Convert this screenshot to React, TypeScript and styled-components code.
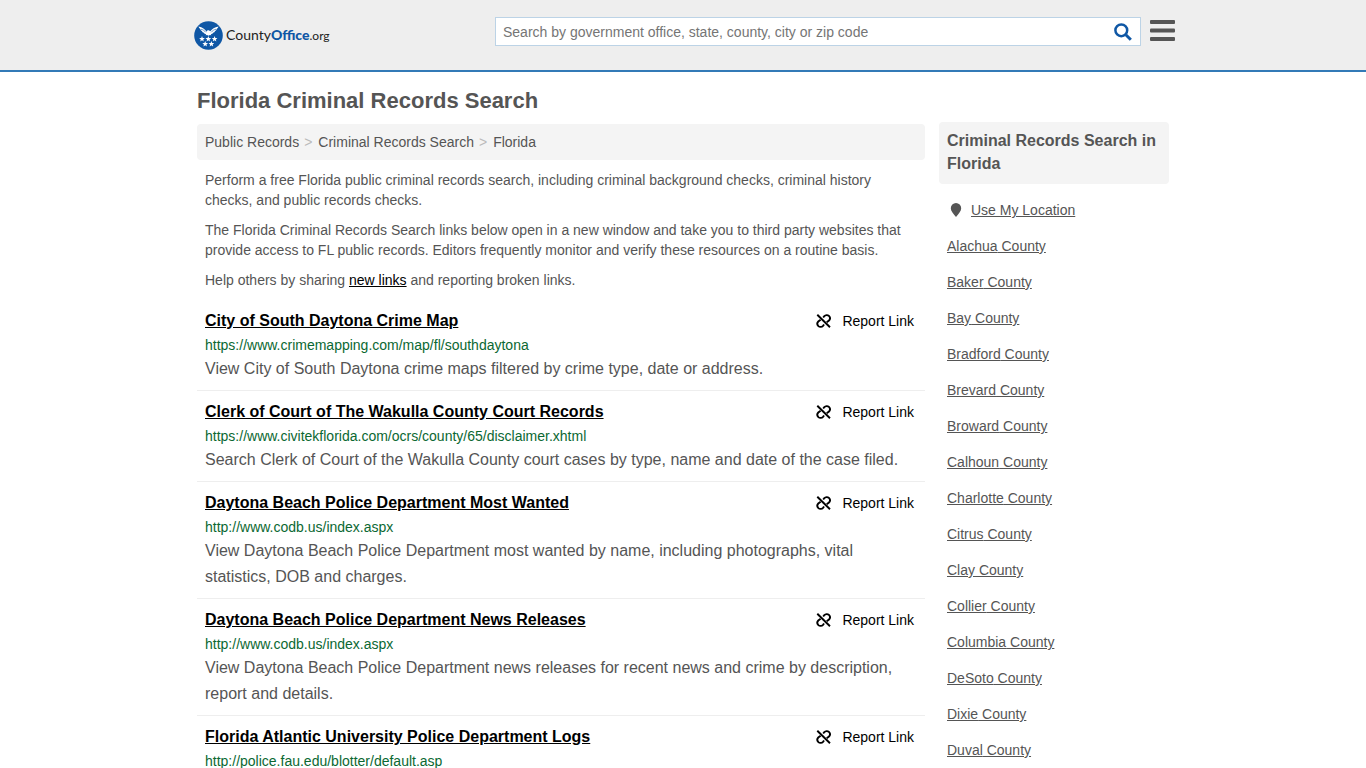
import React from "react";
import styled, { createGlobalStyle } from "styled-components";

const GlobalStyle = createGlobalStyle`
  *, *::before, *::after { box-sizing: border-box; }
  body {
    margin: 0;
    background: #fff;
    color: #555;
    font: 14px/20px "Liberation Sans", Arial, Helvetica, sans-serif;
  }
  h1, h2, h3, p, ul, ol { margin: 0; padding: 0; }
  ul, ol { list-style: none; }
  a { color: inherit; }
  html { overflow-x: hidden; scrollbar-width: none; }
`;

const Header = styled.header`
  background: #eee;
  border-bottom: 2px solid #337ab7;
`;

const HeaderInner = styled.div`
  display: flex;
  align-items: center;
  max-width: 988px;
  height: 70px;
  margin: 0 auto;
  padding: 0 2px 8px 5px;
`;

const Logo = styled.a`
  display: flex;
  align-items: center;
  gap: 3px;
  margin-top: 8px;
  color: #222;
  font: 14px/20px Lato, sans-serif;
  text-decoration: none;

  b { color: #0f57a5; font-weight: 900; }
  small { font-size: 12px; }
`;

const SearchForm = styled.form`
  display: flex;
  flex: 0 1 646px;
  height: 29px;
  margin-left: auto;
  background: #fff;
  border: 1px solid #bcd3e6;
`;

const SearchInput = styled.input`
  flex: 1;
  min-width: 0;
  padding: 2px 7px 0;
  border: 0;
  background: none;
  color: #555;
  font: inherit;
  outline: none;

  &::placeholder { color: #757575; opacity: 1; }
`;

const IconButton = styled.button`
  display: flex;
  align-items: center;
  justify-content: center;
  flex: none;
  width: 34px;
  padding: 2px 0 0;
  border: 0;
  background: none;
  cursor: pointer;
`;

const MenuButton = styled(IconButton)`
  width: 26px;
  margin-left: 8px;
  padding: 0;
`;

const Page = styled.main`
  max-width: 988px;
  margin: 0 auto;
  padding: 16px 8px;
`;

const Title = styled.h1`
  margin-bottom: 8px;
  font-size: 22px;
  line-height: 26px;
`;

const Columns = styled.div`
  display: flex;
  align-items: flex-start;
  gap: 14px;
`;

const MainColumn = styled.div`
  flex: 1;
  min-width: 0;
  padding-top: 2px;
`;

const Crumbs = styled.ol`
  display: flex;
  padding: 8px;
  border-radius: 4px;
  background: #f4f4f4;

  a { text-decoration: none; }
  li + li::before { content: ">"; padding: 0 6px 0 5px; color: #bbb; }
`;

const Intro = styled.div`
  display: grid;
  gap: 10px;
  padding: 10px 8px;

  a { color: #000; }
`;

const Resource = styled.li`
  padding: 8px 11px 8px 8px;
  border-bottom: 1px solid #eee;
`;

const ResourceTop = styled.div`
  display: flex;
  justify-content: space-between;
  line-height: 26px;
`;

const ResourceTitle = styled.h2`
  color: #000;
  font-size: 16px;
`;

const ResourceUrl = styled.p`
  color: #0b6832;
  line-height: 22px;
`;

const ResourceText = styled.p`
  max-width: 700px;
  font-size: 16px;
  line-height: 26px;
`;

const ReportLink = styled.a`
  display: flex;
  align-items: center;
  gap: 11px;
  color: #000;
  text-decoration: none;
`;

const Sidebar = styled.aside`
  flex: 0 0 230px;
`;

const SidebarTitle = styled.h3`
  padding: 7px 8px 9px;
  border-radius: 4px;
  background: #f4f4f4;
  font-size: 16px;
  line-height: 23px;
`;

const CountyList = styled.ul`
  padding: 8px;
  line-height: 36px;
`;

const LocationItem = styled.li`
  display: flex;
  align-items: center;
  gap: 9px;
  padding-left: 3px;
`;

const resources = [
  ["City of South Daytona Crime Map", "https://www.crimemapping.com/map/fl/southdaytona", "View City of South Daytona crime maps filtered by crime type, date or address."],
  ["Clerk of Court of The Wakulla County Court Records", "https://www.civitekflorida.com/ocrs/county/65/disclaimer.xhtml", "Search Clerk of Court of the Wakulla County court cases by type, name and date of the case filed."],
  ["Daytona Beach Police Department Most Wanted", "http://www.codb.us/index.aspx", "View Daytona Beach Police Department most wanted by name, including photographs, vital statistics, DOB and charges."],
  ["Daytona Beach Police Department News Releases", "http://www.codb.us/index.aspx", "View Daytona Beach Police Department news releases for recent news and crime by description, report and details."],
  ["Florida Atlantic University Police Department Logs", "http://police.fau.edu/blotter/default.asp", ""],
];

const counties = ["Alachua", "Baker", "Bay", "Bradford", "Brevard", "Broward", "Calhoun", "Charlotte", "Citrus", "Clay", "Collier", "Columbia", "DeSoto", "Dixie", "Duval"];

function starPoints(cx: number, cy: number) {
  return Array.from({ length: 10 }, (_, i) => {
    const radius = i % 2 ? 1.3 : 3;
    const angle = (i * Math.PI) / 5 - Math.PI / 2;
    return `${cx + radius * Math.cos(angle)},${cy + radius * Math.sin(angle)}`;
  }).join(" ");
}

const stars = [[8, 18], [14.3, 18], [20.6, 18], [11.2, 23], [17.4, 23]];

function Emblem() {
  return (
    <svg width="29" height="29" viewBox="0 0 29 29" aria-hidden="true">
      <circle cx="14.5" cy="14.5" r="14.3" fill="#0f57a5" />
      <g fill="#fff">
        <path d="M4.500 5.500C8.500 6.200 11 8.500 12.600 10.700c.5-1.200 1.300-1.600 2.200-1.400l1.500 1C18 8 20.500 6.200 24.500 5.500c-.4 1.300-1 2-1.900 2.500 0 .9-.7 1.600-1.600 2-.2 1-.9 1.500-1.900 1.800-.5 1-1.300 1.400-2.300 1.400l.6 1-1.500-.1-1.400.7-1.400-.7-1.500.1.6-1c-1 0-1.800-.4-2.300-1.400-1-.3-1.700-.8-1.900-1.800-.9-.4-1.600-1.100-1.600-2-.9-.5-1.500-1.200-1.900-2.500z" />
        {stars.map(([x, y]) => <polygon key={`${x}-${y}`} points={starPoints(x, y)} />)}
      </g>
      <path d="M7 8.300c2 .3 3.500 1.400 4.800 3M22 8.300c-2 .3-3.500 1.400-4.800 3" fill="none" stroke="#0f57a5" strokeWidth=".6" />
    </svg>
  );
}

function BrokenLinkIcon() {
  return (
    <svg width="16" height="16" viewBox="0 0 16 16" fill="none" stroke="#000" strokeWidth="1.9" aria-hidden="true">
      <path d="M2.300 1.800 15 14.300" />
      <path d="M8.200 4.500 9.300 3.200C10.500 1.900 12.600 1.700 13.900 2.900c1.300 1.300 1.300 3.300.1 4.600L11.700 9.300" />
      <path d="M9.100 11.500 8 12.800C6.800 14.100 4.700 14.300 3.400 13.100 2.100 11.800 2.100 9.800 3.300 8.500L5.600 6.700" />
    </svg>
  );
}

export default function App() {
  return (
    <>
      <GlobalStyle />
      <Header>
        <HeaderInner>
          <Logo href="#">
            <Emblem />
            <span>County<b>Office</b><small>.org</small></span>
          </Logo>
          <SearchForm role="search">
            <SearchInput type="text" aria-label="Search" placeholder="Search by government office, state, county, city or zip code" />
            <IconButton type="submit" aria-label="Submit search">
              <svg width="18" height="18" viewBox="0 0 18 18" fill="none" stroke="#0f57a5">
                <circle cx="7.300" cy="7.300" r="5.900" strokeWidth="2.500" />
                <path d="M11.800 11.800 16.800 16.800" strokeWidth="3" />
              </svg>
            </IconButton>
          </SearchForm>
          <MenuButton type="button" aria-label="Menu">
            <svg width="26" height="22" viewBox="0 0 26 22" fill="#555">
              <rect x="1" y="0" width="25" height="4" rx="1" />
              <rect x="1" y="8.500" width="25" height="4" rx="1" />
              <rect x="1" y="17" width="25" height="4" rx="1" />
            </svg>
          </MenuButton>
        </HeaderInner>
      </Header>
      <Page>
        <Title>Florida Criminal Records Search</Title>
        <Columns>
          <MainColumn>
            <nav aria-label="Breadcrumb">
              <Crumbs>
                <li><a href="#">Public Records</a></li>
                <li><a href="#">Criminal Records Search</a></li>
                <li><a href="#">Florida</a></li>
              </Crumbs>
            </nav>
            <Intro>
              <p>Perform a free Florida public criminal records search, including criminal background checks, criminal history checks, and public records checks.</p>
              <p>The Florida Criminal Records Search links below open in a new window and take you to third party websites that provide access to FL public records. Editors frequently monitor and verify these resources on a routine basis.</p>
              <p>Help others by sharing <a href="#">new links</a> and reporting broken links.</p>
            </Intro>
            <ul>
              {resources.map(([title, url, text]) => (
                <Resource key={title}>
                  <ResourceTop>
                    <ResourceTitle><a href="#">{title}</a></ResourceTitle>
                    <ReportLink href="#"><BrokenLinkIcon />Report Link</ReportLink>
                  </ResourceTop>
                  <ResourceUrl>{url}</ResourceUrl>
                  {text && <ResourceText>{text}</ResourceText>}
                </Resource>
              ))}
            </ul>
          </MainColumn>
          <Sidebar>
            <SidebarTitle>Criminal Records Search in Florida</SidebarTitle>
            <CountyList>
              <LocationItem>
                <svg width="12" height="14" viewBox="0 0 12 14" fill="#555" aria-hidden="true">
                  <path d="M6 0a5.200 5.200 0 0 1 5.200 5.200C11.200 8 8.500 11 6 14 3.500 11 .8 8 .8 5.200A5.200 5.200 0 0 1 6 0z" />
                </svg>
                <a href="#">Use My Location</a>
              </LocationItem>
              {counties.map((name) => (
                <li key={name}><a href="#">{name} County</a></li>
              ))}
            </CountyList>
          </Sidebar>
        </Columns>
      </Page>
    </>
  );
}
